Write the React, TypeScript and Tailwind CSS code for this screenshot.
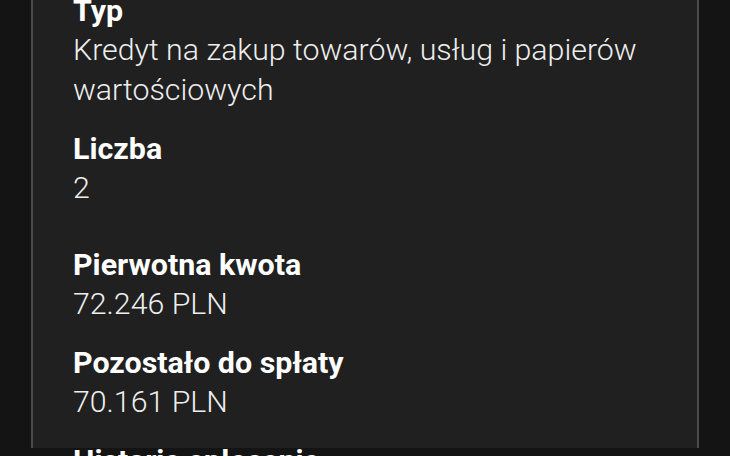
import React from "react";

const Field: React.FC<{ label: string; value: string; extra?: string }> = ({
  label,
  value,
  extra = "mb-5",
}) => (
  <div className={extra}>
    <div className="text-[30.4px] font-bold leading-[38px] text-white">{label}</div>
    {value && (
      <div className="text-[30.3px] font-light leading-[40px] text-[#eeeeee]">{value}</div>
    )}
  </div>
);

const App: React.FC = () => {
  const fields = [
    { label: "Typ", value: "Kredyt na zakup towarów, usług i papierów wartościowych", extra: "mb-5" },
    { label: "Liczba", value: "2", extra: "mb-[38px]" },
    { label: "Pierwotna kwota", value: "72.246 PLN", extra: "mb-5" },
    { label: "Pozostało do spłaty", value: "70.161 PLN", extra: "mb-5" },
    { label: "Historia spłacania", value: "", extra: "mb-5" },
  ];

  return (
    <div className="h-[456px] w-[730px] overflow-hidden bg-[#141414] font-['Roboto',sans-serif]">
      <div className="mx-[31px] h-full border-x-2 border-[#4a4a4a] bg-[#202020] pl-[40px] pr-6">
        <div className="-mt-[8px] w-[590px]">
          {fields.map((f) => (
            <Field key={f.label} label={f.label} value={f.value} extra={f.extra} />
          ))}
        </div>
      </div>
    </div>
  );
};

export default App;
